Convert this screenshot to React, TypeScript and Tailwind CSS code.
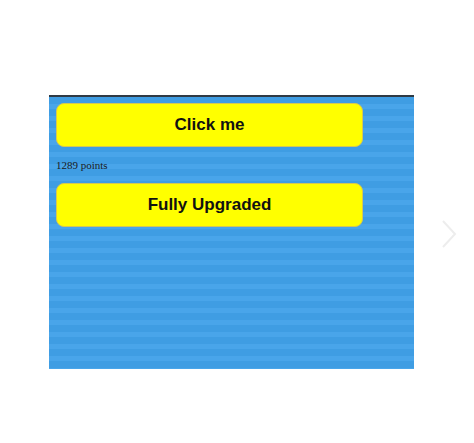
import React from 'react'

export default function App() {
  return (
    <div className="relative w-[474px] h-[443px] bg-white pt-[95px] pl-[49px]">
      {/* Game panel */}
      <div
        className="w-[365px] h-[274px] border-t-[2px] border-[#2f3a44] bg-[repeating-linear-gradient(180deg,#3f9de3_0px,#3f9de3_7px,#49a5ea_7px,#49a5ea_12px)] px-[7px] pt-[6px] flex flex-col"
        style={{ fontFamily: '"Liberation Serif", serif' }}
      >
        <button className="w-[307px] h-[44px] rounded-lg bg-[#ffff00] border border-[#d6c850] text-[17px] font-bold text-[#111] [font-family:'Liberation_Sans',Arial,sans-serif]">
          Click me
        </button>
        <p className="h-[36px] flex items-center text-[11px] text-[#1a1a1a]">1289 points</p>
        <button className="w-[307px] h-[44px] rounded-lg bg-[#ffff00] border border-[#d6c850] text-[17px] font-bold text-[#111] [font-family:'Liberation_Sans',Arial,sans-serif]">
          Fully Upgraded
        </button>
      </div>

      {/* Faint carousel arrow */}
      <svg
        className="absolute left-[440px] top-[219px]"
        width="18"
        height="30"
        viewBox="0 0 18 30"
        fill="none"
      >
        <polyline points="3,2 15,15 3,28" stroke="#ededed" strokeWidth="2" />
      </svg>
    </div>
  )
}
